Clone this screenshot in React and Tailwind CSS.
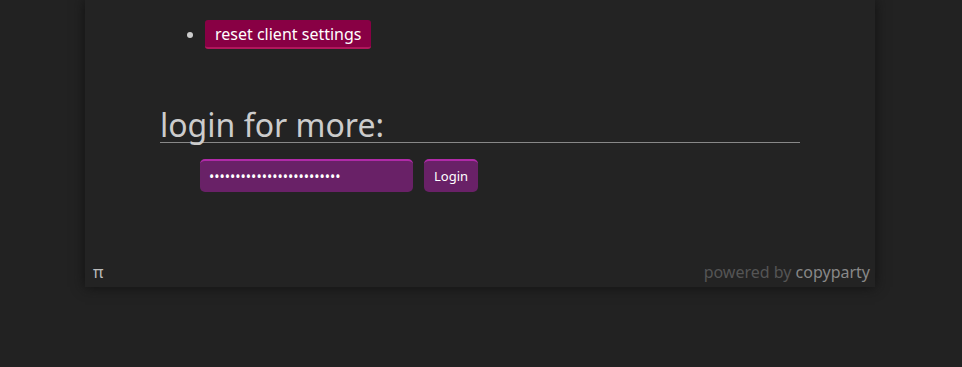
import React from 'react';

const font = { fontFamily: '"Noto Sans", "Open Sans", sans-serif' };

export default function App() {
  return (
    <div className="min-h-[367px] bg-[#222] text-[#ccc]" style={font}>
      <div className="ml-[85px] w-[790px] bg-[#232323] shadow-[0_0_12px_#111]">
        {/* settings list */}
        <ul className="list-disc pl-[120px] pt-5 marker:text-[#ccc]">
          <li>
            <button className="h-[29px] rounded-[3px] border-b-2 border-[#b1175c] bg-[#880044] px-[10px] text-[16px] leading-none text-white">
              reset client settings
            </button>
          </li>
        </ul>

        {/* login */}
        <div className="px-[75px] pt-[59px]">
          <h2 className="border-b border-[#888] text-[32px] leading-[34px] text-[#ccc]">
            login for more:
          </h2>
          <div className="flex gap-[11px] pl-[40px] pt-4">
            <input
              type="password"
              defaultValue="lorem-ipsum-dolor-sit-ame"
              className="h-[33px] w-[213px] rounded-[5px] border-t-2 border-[#b02aa8] bg-[#692167] px-[9px] text-[14px] text-white outline-none"
            />
            <button className="h-[33px] rounded-[5px] border-t-2 border-[#b02aa8] bg-[#692167] px-[10px] text-[13px] text-white">
              Login
            </button>
          </div>
        </div>

        {/* footer */}
        <div className="mt-[70px] flex items-end justify-between pl-2 pr-[5px] pb-[5px] text-[16px] leading-5">
          <span className="text-[#bbb]">π</span>
          <span className="text-[#555]">
            powered by <span className="text-[#888]">copyparty</span>
          </span>
        </div>
      </div>
    </div>
  );
}
